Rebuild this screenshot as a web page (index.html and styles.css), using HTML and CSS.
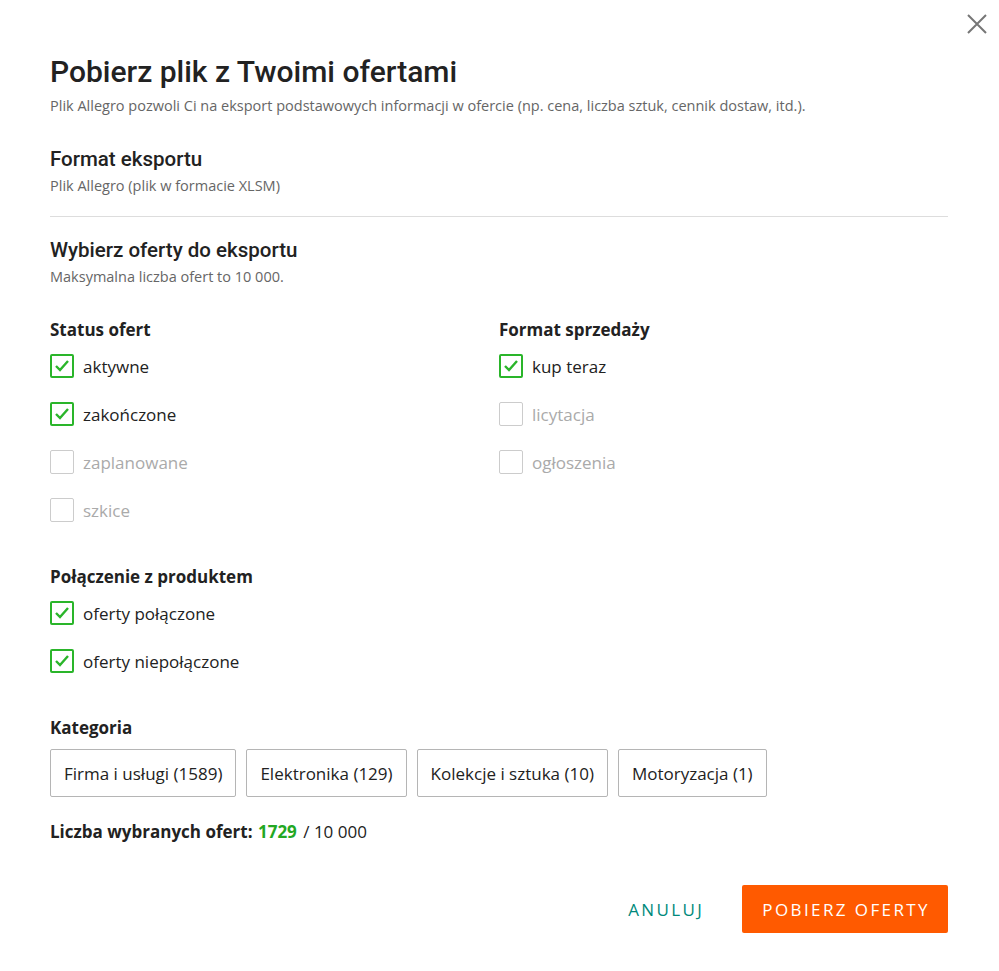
FILE: index.html
```html
<!DOCTYPE html>
<html lang="pl">
<head>
    <meta charset="UTF-8">
    <meta name="viewport" content="width=device-width, initial-scale=1.0">
    <title>Pobierz plik z Twoimi ofertami</title>
    <link rel="stylesheet" href="styles.css">
</head>
<body>
    <div class="modal">
        <button class="close-btn" aria-label="Zamknij">
            <svg width="20" height="20" viewBox="0 0 20 20">
                <path d="M1 1 L19 19 M19 1 L1 19" stroke="#767676" stroke-width="2" fill="none"/>
            </svg>
        </button>

        <h1>Pobierz plik z Twoimi ofertami</h1>
        <p class="lead">Plik Allegro pozwoli Ci na eksport podstawowych informacji w ofercie (np. cena, liczba sztuk, cennik dostaw, itd.).</p>

        <h2 class="section-title first">Format eksportu</h2>
        <p class="lead small-gap">Plik Allegro (plik w formacie XLSM)</p>

        <hr>

        <h2 class="section-title">Wybierz oferty do eksportu</h2>
        <p class="lead small-gap">Maksymalna liczba ofert to 10 000.</p>

        <div class="columns">
            <div class="group">
                <div class="group-label">Status ofert</div>
                <label class="check checked"><span class="box"></span>aktywne</label>
                <label class="check checked"><span class="box"></span>zakończone</label>
                <label class="check"><span class="box"></span>zaplanowane</label>
                <label class="check"><span class="box"></span>szkice</label>
            </div>
            <div class="group">
                <div class="group-label">Format sprzedaży</div>
                <label class="check checked"><span class="box"></span>kup teraz</label>
                <label class="check"><span class="box"></span>licytacja</label>
                <label class="check"><span class="box"></span>ogłoszenia</label>
            </div>
        </div>

        <div class="group">
            <div class="group-label">Połączenie z produktem</div>
            <label class="check checked"><span class="box"></span>oferty połączone</label>
            <label class="check checked"><span class="box"></span>oferty niepołączone</label>
        </div>

        <div class="group">
            <div class="group-label">Kategoria</div>
            <div class="chips">
                <button class="chip">Firma i usługi (1589)</button>
                <button class="chip">Elektronika (129)</button>
                <button class="chip">Kolekcje i sztuka (10)</button>
                <button class="chip">Motoryzacja (1)</button>
            </div>
        </div>

        <p class="count"><strong>Liczba wybranych ofert:</strong> <span class="count-value">1729</span> / 10 000</p>

        <div class="actions">
            <button class="btn-link">Anuluj</button>
            <button class="btn-primary">Pobierz oferty</button>
        </div>
    </div>
</body>
</html>
```

FILE: styles.css
```css
body {
    margin: 0;
    background-color: #fff;
    font-family: "Open Sans", Arial, sans-serif;
    color: #222;
}

.modal {
    position: relative;
    width: 898px;
    padding: 54px 51px 40px 50px;
}

.close-btn {
    position: absolute;
    top: 14px;
    right: 12px;
    padding: 0;
    border: 0;
    background: none;
    cursor: pointer;
}

h1 {
    margin: 0;
    font-family: Roboto, Arial, sans-serif;
    font-weight: 500;
    font-size: 30px;
    line-height: 36px;
}

.lead {
    margin: 6px 0 0;
    font-size: 14.5px;
    line-height: 20px;
    color: #666;
}

.lead.small-gap {
    margin-top: 3px;
}

.section-title {
    margin: 19px 0 0;
    font-family: Roboto, Arial, sans-serif;
    font-weight: 500;
    font-size: 20.5px;
    line-height: 28px;
}

.section-title.first {
    margin-top: 29px;
}

hr {
    margin: 20px 0 0;
    border: 0;
    border-top: 1px solid #ddd;
}

.columns {
    display: grid;
    grid-template-columns: 1fr 1fr;
}

.group {
    margin-top: 31px;
}

.group-label {
    font-weight: 700;
    font-size: 17px;
    line-height: 24px;
}

.check {
    display: flex;
    align-items: center;
    gap: 9px;
    height: 48px;
    font-size: 17px;
    color: #aaa;
    cursor: pointer;
}

.check .box {
    width: 24px;
    height: 24px;
    box-sizing: border-box;
    border: 1px solid #ccc;
    border-radius: 2px;
}

.check.checked {
    color: #222;
}

.check.checked .box {
    border: 2px solid #2ab52a;
    background: url("data:image/svg+xml,%3Csvg xmlns='http://www.w3.org/2000/svg' viewBox='0 0 20 20'%3E%3Cpolyline points='4,10 8,14 16,5' fill='none' stroke='%232ab52a' stroke-width='2.4'/%3E%3C/svg%3E") center / 20px 20px no-repeat;
}

.chips {
    display: flex;
    gap: 10px;
    margin-top: 9px;
}

.chip {
    height: 48px;
    padding: 0 13px;
    border: 1px solid #b5b5b5;
    border-radius: 2px;
    background: #fff;
    font-family: "Open Sans", Arial, sans-serif;
    font-size: 17px;
    color: #222;
    cursor: pointer;
}

.count {
    margin: 23px 0 0;
    font-size: 17px;
    line-height: 24px;
}

.count-value {
    font-weight: 700;
    color: #23a823;
    margin: 0 2px 0 1px;
}

.actions {
    display: flex;
    justify-content: flex-end;
    align-items: center;
    margin-top: 41px;
}

.btn-link,
.btn-primary {
    height: 48px;
    border: 0;
    font-family: "Open Sans", Arial, sans-serif;
    font-size: 17px;
    letter-spacing: 2.4px;
    text-transform: uppercase;
    cursor: pointer;
}

.btn-link {
    background: none;
    color: #00897b;
    padding: 0 20px;
    margin-right: 18px;
}

.btn-primary {
    background-color: #ff5a00;
    color: #fff;
    border-radius: 2px;
    padding: 0 18px 0 20px;
}
```
